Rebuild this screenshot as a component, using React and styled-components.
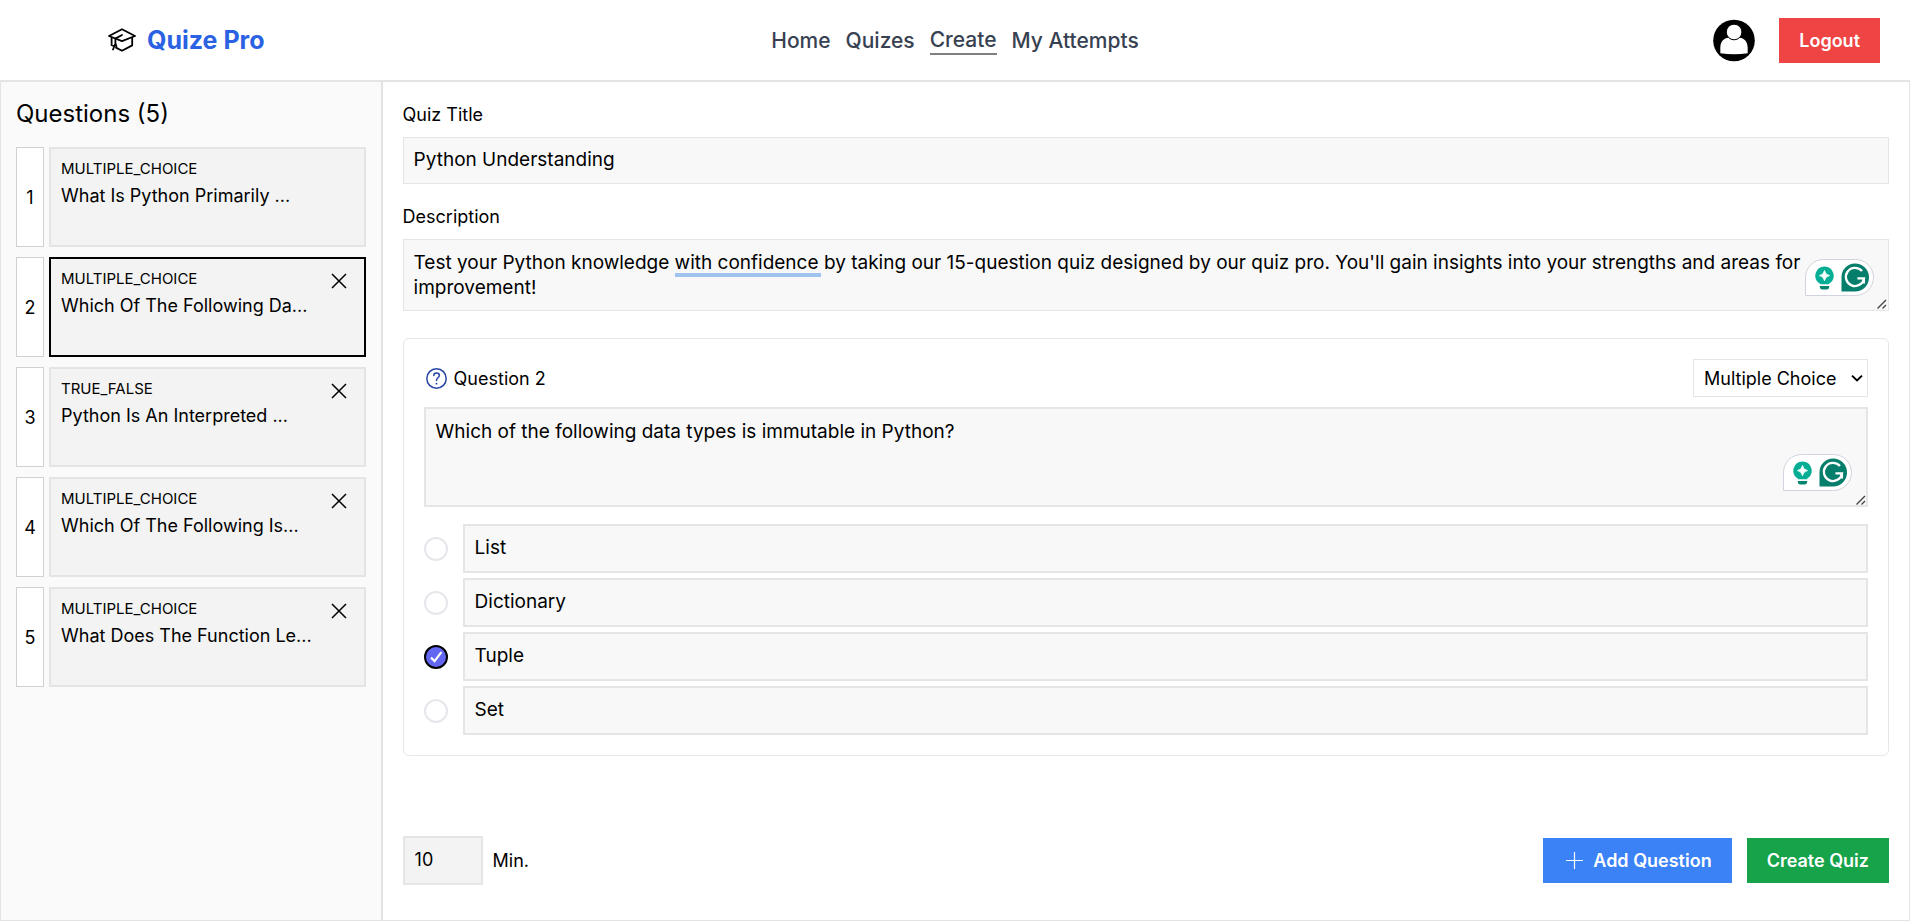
import React, { useState } from "react";
import styled, { createGlobalStyle } from "styled-components";

const GlobalStyle = createGlobalStyle`
  *, *::before, *::after { box-sizing: border-box; }
  body {
    margin: 0;
    background: #ffffff;
    color: #000000;
    font-family: Inter, "Noto Sans", sans-serif;
    font-size: 18px;
    line-height: 25px;
  }
  h1, h2, p { margin: 0; font-weight: 400; }
  button, input, select, textarea { font: inherit; color: inherit; }
`;

const Header = styled.header`
  display: grid;
  grid-template-columns: 1fr auto 1fr;
  align-items: center;
  height: 81px;
  border-bottom: 1px solid #e4e4e4;
`;

const Brand = styled.a`
  display: flex;
  align-items: center;
  gap: 11px;
  margin-left: 108px;
  color: #2b62e3;
  font-size: 25px;
  font-weight: 700;
  text-decoration: none;
`;

const Nav = styled.nav`
  display: flex;
  align-items: center;
  gap: 15px;
`;

const NavLink = styled.a`
  color: #374151;
  font-size: 21px;
  font-weight: 500;
  line-height: 27px;
  text-decoration: none;
  border-bottom: ${(p) => (p.$active ? "2px solid #808080" : "0")};
`;

const Account = styled.div`
  display: flex;
  align-items: center;
  justify-content: flex-end;
  gap: 24px;
  margin-right: 30px;
`;

const AvatarButton = styled.button`
  display: flex;
  padding: 0;
  border: 0;
  background: none;
`;

const Button = styled.button`
  display: flex;
  align-items: center;
  gap: 7px;
  height: 45px;
  padding: 0 20px;
  border: 0;
  background: ${(p) => p.$color};
  color: #ffffff;
  font-weight: 600;
  white-space: nowrap;
`;

const Layout = styled.div`
  display: flex;
  min-height: calc(100vh - 82px);
  border: 1px solid #e4e4e4;
`;

const Sidebar = styled.aside`
  flex: 0 0 20%;
  padding: 15px;
  border-right: 2px solid #e2e2e4;
  background: #fafafa;
`;

const SidebarTitle = styled.h1`
  margin-bottom: 16px;
  font-size: 24px;
  line-height: 34px;
`;

const QuestionList = styled.ol`
  display: flex;
  flex-direction: column;
  gap: 10px;
  margin: 0;
  padding: 0;
  list-style: none;
`;

const QuestionItem = styled.li`
  display: flex;
  gap: 5px;
  height: 100px;
`;

const QuestionNumber = styled.span`
  display: flex;
  flex: 0 0 28px;
  align-items: center;
  justify-content: center;
  border: 1px solid #d1d1d5;
  background: #ffffff;
`;

const QuestionCard = styled.div`
  display: flex;
  flex: 1;
  min-width: 0;
  justify-content: space-between;
  align-items: flex-start;
  padding: 7px 15px 7px 10px;
  border: 2px solid ${(p) => (p.$selected ? "#000000" : "#e4e4e6")};
  background: #f3f3f3;
`;

const QuestionKind = styled.p`
  font-size: 15px;
  line-height: 25px;
`;

const QuestionText = styled.p`
  line-height: 29px;
  white-space: nowrap;
`;

const RemoveButton = styled.button`
  display: flex;
  padding: 5px 0;
  border: 0;
  background: none;
`;

const Editor = styled.main`
  display: flex;
  flex: 1;
  min-width: 0;
  flex-direction: column;
  padding: 20px;
`;

const Label = styled.label`
  margin-bottom: 10px;
`;

const TitleInput = styled.input`
  width: 100%;
  height: 47px;
  margin-bottom: 20px;
  padding: 0 10px 2px;
  border: 1px solid #e5e5e5;
  border-radius: 0;
  background: #f8f8f8;
  font-size: 19px;
`;

const AreaWrap = styled.div`
  position: relative;
  display: flex;
`;

const Area = styled.textarea`
  flex: 1;
  width: 100%;
  height: ${(p) => p.$height}px;
  padding: 10px 80px 10px 10px;
  border: ${(p) => p.$border}px solid #e5e5e7;
  border-radius: 0;
  background: #f8f8f8;
  font-size: 19px;
  line-height: 25px;
  outline: none;
  resize: vertical;
  &::-webkit-resizer { background: transparent; }
`;

const Grip = styled.svg`
  position: absolute;
  right: 2px;
  bottom: 2px;
  pointer-events: none;
`;

const Suggestion = styled.span`
  position: absolute;
  top: 34px;
  left: 272px;
  width: 146px;
  height: 4px;
  background: #a0c3ef;
`;

const AssistantBadge = styled.div`
  position: absolute;
  right: ${(p) => p.$inset}px;
  bottom: ${(p) => p.$inset}px;
  display: flex;
  align-items: center;
  justify-content: space-between;
  width: 69px;
  height: 37px;
  padding: 0 4px 0 9px;
  border: 1px solid #d2d3de;
  border-radius: 19px 19px 19px 0;
  background: #ffffff;
`;

const QuestionPanel = styled.section`
  margin-top: 27px;
  padding: 20px;
  border: 1px solid #e5e7eb;
  border-radius: 6px;
`;

const PanelHeader = styled.div`
  display: flex;
  align-items: center;
  justify-content: space-between;
  margin-bottom: 10px;
`;

const PanelTitle = styled.label`
  display: flex;
  align-items: center;
  gap: 6px;
`;

const SelectWrap = styled.div`
  display: grid;
  align-items: center;
  & > * { grid-area: 1 / 1; }
  & > svg {
    justify-self: end;
    margin-right: 5px;
    pointer-events: none;
  }
`;

const KindSelect = styled.select`
  appearance: none;
  width: 175px;
  height: 38px;
  padding: 0 20px 0 10px;
  border: 1px solid #e5e5e5;
  border-radius: 0;
  background: #ffffff;
`;

const Options = styled.div`
  display: flex;
  flex-direction: column;
  gap: 5px;
  margin-top: 17px;
`;

const OptionRow = styled.div`
  display: flex;
  align-items: center;
  gap: 15px;
`;

const RadioCell = styled.label`
  display: grid;
  place-items: center;
  & > * { grid-area: 1 / 1; }
  & > svg { pointer-events: none; z-index: 1; }
`;

const Radio = styled.input`
  appearance: none;
  width: 24px;
  height: 24px;
  margin: 0;
  border: 2px solid #e5e7eb;
  border-radius: 50%;
  background: #ffffff;
  &:checked {
    border-color: #000000;
    background: #6366f1;
  }
`;

const BoxInput = styled.input`
  flex: ${(p) => (p.$narrow ? "0 0 80px" : "1")};
  min-width: 0;
  width: ${(p) => (p.$narrow ? "80px" : "auto")};
  height: 49px;
  padding: 0 10px 2px;
  border: 2px solid #e4e5e7;
  border-radius: 0;
  background: ${(p) => (p.$narrow ? "#f3f3f3" : "#f8f8f8")};
  font-size: ${(p) => (p.$narrow ? "18px" : "19px")};
`;

const Footer = styled.footer`
  display: flex;
  align-items: center;
  justify-content: space-between;
  margin-top: 80px;
`;

const Group = styled.div`
  display: flex;
  align-items: center;
  gap: ${(p) => p.$gap}px;
`;

const CapIcon = () => (
  <svg width="28" height="24" viewBox="0 0 28 24" fill="none" stroke="#000" strokeWidth="1.8" strokeLinejoin="round" strokeLinecap="round" aria-hidden="true">
    <path d="M14 1.2 27 8 14 13.2 1 8Z" />
    <path d="M24.2 10V17.4L14 22.8 8 19.6" />
    <path d="M14 7 7.4 10.6V15.5L5 21.5M7.4 15 8.4 18.6M3.6 10V17.2L6 18" />
  </svg>
);

const AvatarIcon = () => (
  <svg width="42" height="43" viewBox="0 0 43 43" aria-hidden="true">
    <circle cx="21.5" cy="21.5" r="21.3" fill="#000" />
    <path d="M7.5 34.5V29C7.5 22.5 11 19 16 18.6Q21.5 22.5 27 18.6C32 19 35.5 22.5 35.5 29V34.5Q21.5 36.8 7.5 34.5Z" fill="#fff" />
    <circle cx="21.6" cy="12.8" r="8" fill="#fff" stroke="#000" strokeWidth="1" />
  </svg>
);

const CloseIcon = () => (
  <svg width="20" height="20" viewBox="0 0 20 20" fill="none" stroke="#000" strokeWidth="1.5" aria-hidden="true">
    <path d="M3 3 17 17M17 3 3 17" />
  </svg>
);

const HelpIcon = () => (
  <svg width="24" height="24" viewBox="0 0 24 24" fill="none" stroke="#2746a6" strokeWidth="1.5" strokeLinecap="round" aria-hidden="true">
    <circle cx="12.5" cy="12.5" r="9.7" />
    <path d="M9.8 9.4C9.8 7.8 10.9 7 12.5 7S15.4 7.9 15.4 9.5C15.4 11.5 12.5 11.6 12.5 14.4" />
    <path d="M12.5 17.6V17.7" strokeWidth="1.8" />
  </svg>
);

const PlusIcon = () => (
  <svg width="23" height="23" viewBox="0 0 23 23" fill="none" stroke="#fff" strokeWidth="1.2" aria-hidden="true">
    <path d="M3 11.5H20M11.5 3V20" />
  </svg>
);

const TickIcon = () => (
  <svg width="16" height="16" viewBox="0 0 16 16" fill="none" stroke="#fff" strokeWidth="2.2" aria-hidden="true">
    <path d="M3 8.6 6.6 12.2 13.4 3.2" />
  </svg>
);

const ChevronIcon = () => (
  <svg width="12" height="8" viewBox="0 0 12 8" fill="none" stroke="#000" strokeWidth="2" aria-hidden="true">
    <path d="M1 1.6 6 6.4 11 1.6" />
  </svg>
);

const GripIcon = () => (
  <Grip width="10" height="10" viewBox="0 0 10 10" fill="none" stroke="#444" strokeWidth="1.4" aria-hidden="true">
    <path d="M0.5 9.5 9 1M5.5 9.5 9 6" />
  </Grip>
);

const BulbIcon = () => (
  <svg width="19" height="24" viewBox="0 0 19 24" aria-hidden="true">
    <path d="M9.5 0.4A9.2 9.2 0 0 1 14.3 17.4L13.6 18.2H5.4L4.7 17.4A9.2 9.2 0 0 1 9.5 0.4Z" fill="#05ae94" />
    <path d="M9.5 4.5Q10.3 8.8 14.6 9.6Q10.3 10.4 9.5 14.7Q8.7 10.4 4.4 9.6Q8.7 8.8 9.5 4.5Z" fill="#fff" stroke="#fff" strokeWidth="0.8" />
    <path d="M4.7 20H14.3Q14.1 23.6 11.8 23.6H7.2Q4.9 23.6 4.7 20Z" fill="#078571" />
  </svg>
);

const AssistantLogo = () => (
  <svg width="28" height="29" viewBox="0 0 28 29" aria-hidden="true">
    <path d="M14 0.5A13.7 13.7 0 0 1 14 28.5H0.5V14A13.5 13.5 0 0 1 14 0.5Z" fill="#057e6c" />
    <path d="M21 8.1A9.1 9.1 0 1 0 23 15.3H16.4M22.9 15.1V20.4" fill="none" stroke="#fff" strokeWidth="2.3" />
  </svg>
);

const Assistant = ({ inset }) => (
  <AssistantBadge $inset={inset}>
    <BulbIcon />
    <AssistantLogo />
  </AssistantBadge>
);

const questions = [
  { kind: "MULTIPLE_CHOICE", text: "What Is Python Primarily ..." },
  { kind: "MULTIPLE_CHOICE", text: "Which Of The Following Da..." },
  { kind: "TRUE_FALSE", text: "Python Is An Interpreted ..." },
  { kind: "MULTIPLE_CHOICE", text: "Which Of The Following Is..." },
  { kind: "MULTIPLE_CHOICE", text: "What Does The Function Le..." },
];

const options = ["List", "Dictionary", "Tuple", "Set"];
const links = ["Home", "Quizes", "Create", "My Attempts"];

export default function App() {
  const [answer, setAnswer] = useState(2);
  return (
    <>
      <GlobalStyle />
      <Header>
        <Brand href="#">
          <CapIcon />
          Quize Pro
        </Brand>
        <Nav>
          {links.map((name) => (
            <NavLink key={name} href="#" $active={name === "Create"}>
              {name}
            </NavLink>
          ))}
        </Nav>
        <Account>
          <AvatarButton type="button" aria-label="Profile">
            <AvatarIcon />
          </AvatarButton>
          <Button type="button" $color="#ef4444">Logout</Button>
        </Account>
      </Header>
      <Layout>
        <Sidebar>
          <SidebarTitle>Questions (5)</SidebarTitle>
          <QuestionList>
            {questions.map((q, i) => (
              <QuestionItem key={i}>
                <QuestionNumber>{i + 1}</QuestionNumber>
                <QuestionCard $selected={i === 1}>
                  <div>
                    <QuestionKind>{q.kind}</QuestionKind>
                    <QuestionText>{q.text}</QuestionText>
                  </div>
                  {i > 0 && (
                    <RemoveButton type="button" aria-label={`Remove question ${i + 1}`}>
                      <CloseIcon />
                    </RemoveButton>
                  )}
                </QuestionCard>
              </QuestionItem>
            ))}
          </QuestionList>
        </Sidebar>
        <Editor>
          <Label htmlFor="title">Quiz Title</Label>
          <TitleInput id="title" defaultValue="Python Understanding" />
          <Label htmlFor="description">Description</Label>
          <AreaWrap>
            <Area
              id="description"
              $height={72}
              $border={1}
              spellCheck={false}
              defaultValue="Test your Python knowledge with confidence by taking our 15-question quiz designed by our quiz pro. You'll gain insights into your strengths and areas for improvement!"
            />
            <Suggestion />
            <Assistant inset={15} />
            <GripIcon />
          </AreaWrap>
          <QuestionPanel>
            <PanelHeader>
              <PanelTitle htmlFor="question">
                <HelpIcon />
                Question 2
              </PanelTitle>
              <SelectWrap>
                <KindSelect aria-label="Question type" defaultValue="Multiple Choice">
                  <option>Multiple Choice</option>
                  <option>True False</option>
                </KindSelect>
                <ChevronIcon />
              </SelectWrap>
            </PanelHeader>
            <AreaWrap>
              <Area
                id="question"
                $height={100}
                $border={2}
                spellCheck={false}
                defaultValue="Which of the following data types is immutable in Python?"
              />
              <Assistant inset={16} />
              <GripIcon />
            </AreaWrap>
            <Options>
              {options.map((text, i) => (
                <OptionRow key={text}>
                  <RadioCell>
                    <Radio
                      type="radio"
                      name="answer"
                      aria-label={`Option ${i + 1} is correct`}
                      checked={answer === i}
                      onChange={() => setAnswer(i)}
                    />
                    {answer === i && <TickIcon />}
                  </RadioCell>
                  <BoxInput aria-label={`Option ${i + 1}`} defaultValue={text} />
                </OptionRow>
              ))}
            </Options>
          </QuestionPanel>
          <Footer>
            <Group $gap={10}>
              <BoxInput id="minutes" type="number" $narrow defaultValue={10} />
              <label htmlFor="minutes">Min.</label>
            </Group>
            <Group $gap={15}>
              <Button type="button" $color="#3b82f6">
                <PlusIcon />
                Add Question
              </Button>
              <Button type="button" $color="#16a34a">Create Quiz</Button>
            </Group>
          </Footer>
        </Editor>
      </Layout>
    </>
  );
}
